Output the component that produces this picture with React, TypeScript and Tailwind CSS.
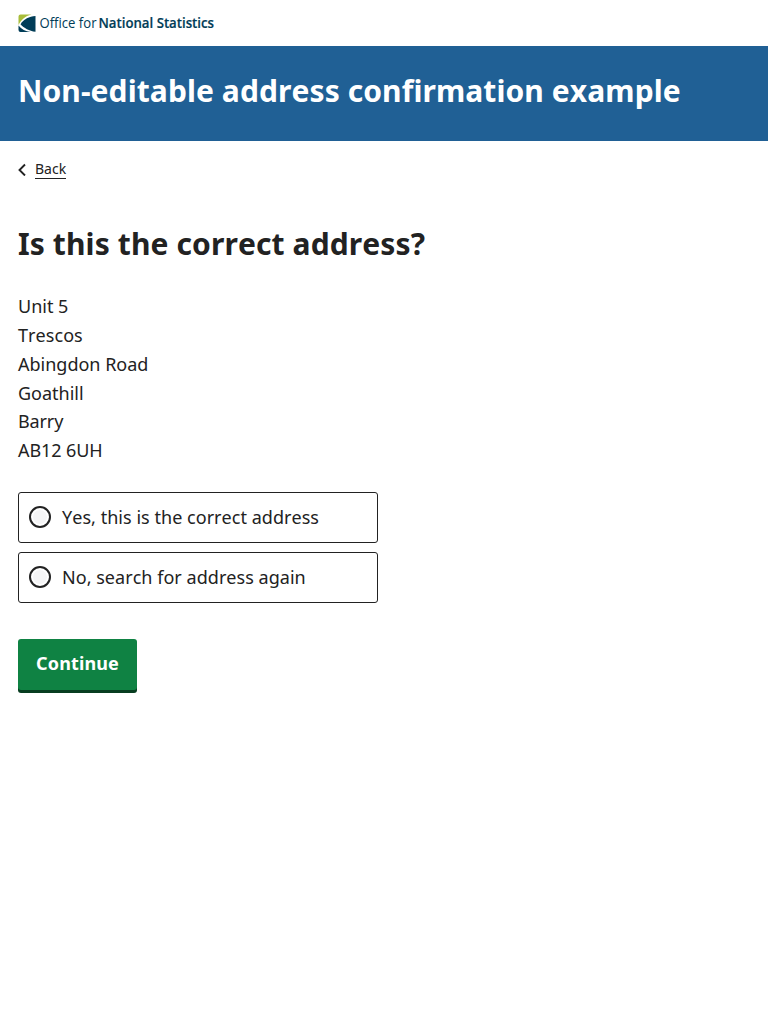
export default function App() {
  const address = [
    { text: "Unit 5", spacing: "" },
    { text: "Trescos", spacing: "tracking-[0.06px]" },
    { text: "Abingdon Road", spacing: "" },
    { text: "Goathill", spacing: "" },
    { text: "Barry", spacing: "tracking-[-0.12px]" },
    { text: "AB12 6UH", spacing: "tracking-[-0.1px]" },
  ];
  const options = ["Yes, this is the correct address", "No, search for address again"];
  return (
    <div className="min-h-screen bg-white font-['Noto_Sans',sans-serif] text-lg leading-[28.8px] text-[#222222] antialiased [font-kerning:none] [text-rendering:optimizeSpeed]">
      <header>
        <div className="flex h-[46px] items-center px-[18px]">
          <svg className="overflow-visible" width="200" height="19" viewBox="0 0 200 19" role="img" aria-label="Office for National Statistics">
            <path d="M.5 11V2.500Q.5.500 2.500.500H13.500C7 2 3 6 .500 11z" fill="#a8bd3a" />
            <path d="M17.500 2v15.800C11 17 6 14 2.500 10.200 6 5 11 2.500 17.500 2z" fill="#003c57" />
            <path d="M.5 11.500c3 3.500 7 6 12 6.500H2.500Q.5 18 .5 16z" fill="#003c57" />
            <text x="21.500" y="14" textLength="57" lengthAdjust="spacingAndGlyphs" fontFamily="Open Sans" fontWeight="400" fontSize="14.500" fill="#003c57" className="[font-variant-ligatures:none]">Office for</text>
            <text x="80.500" y="14" textLength="115.500" lengthAdjust="spacingAndGlyphs" fontFamily="Open Sans" fontWeight="600" fontSize="14" fill="#003c57" stroke="#003c57" strokeWidth="0.200">National Statistics</text>
          </svg>
        </div>
        <div className="h-[95px] bg-[#206095] px-[18px] pt-[25px]">
          <div className="text-[30px] leading-[40px] font-bold tracking-[0.09px] text-white">Non-editable address confirmation example</div>
        </div>
      </header>
      <nav className="flex h-[57px] items-center px-[18px]">
        <a href="#" className="flex items-center text-sm leading-[18px]">
          <svg className="mr-[9px]" width="8" height="13" viewBox="0 0 8 13" fill="none" stroke="#222222" strokeWidth="1.900"><path d="M7 1.500 1.500 7 7 12.500" /></svg>
          <span className="border-b border-[#222222]">Back</span>
        </a>
      </nav>
      <main className="px-[18px] pt-[26px]">
        <h1 className="text-[30px] leading-[40px] font-bold tracking-[0.11px]">Is this the correct address?</h1>
        <address className="mt-[28.2px] not-italic">
          {address.map((line) => <div key={line.text} className={line.spacing}>{line.text}</div>)}
        </address>
        <div className="mt-[27px] flex flex-col gap-[9px]">
          {options.map((option) => (
            <label key={option} className="flex h-[51px] w-[360px] items-center rounded-[3px] border border-[#222222] pl-[10px] tracking-[0.035px]">
              <input type="radio" name="address" className="mr-[11px] size-[22px] appearance-none rounded-full border-2 border-[#222222] bg-[#f5f5f6] shadow-[inset_0_0_0_2px_white]" />
              {option}
            </label>
          ))}
        </div>
        <button className="mt-9 h-[51px] w-[119px] rounded-[3px] bg-[#0f8243] pb-[2px] font-bold tracking-[0.12px] text-white shadow-[0_3px_0_#073d20]">Continue</button>
      </main>
    </div>
  );
}
